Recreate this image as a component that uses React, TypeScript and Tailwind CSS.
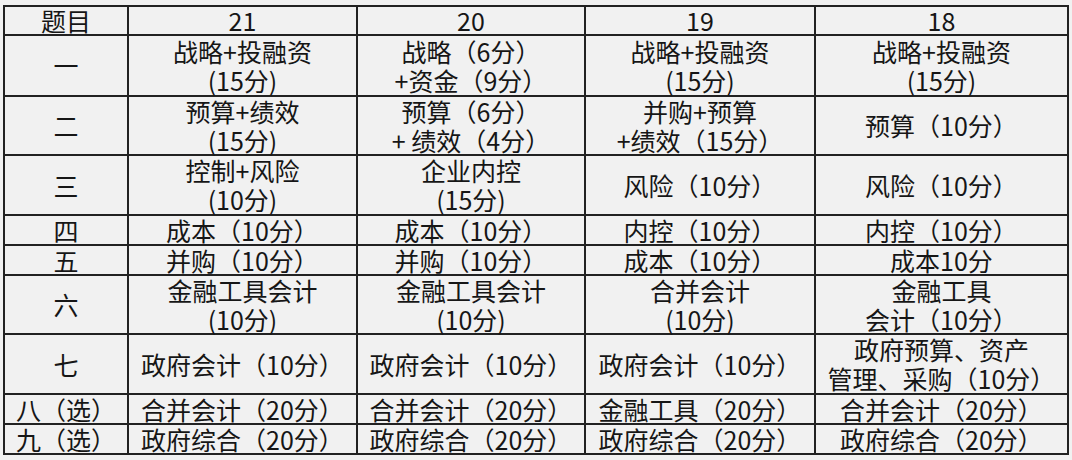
import React from "react";

type Row = { h: string; cells: string[][] };

const header = ["题目", "21", "20", "19", "18"];

const rows: Row[] = [
  {
    h: "一",
    cells: [
      ["战略+投融资", "(15分)"],
      ["战略（6分）", "+资金（9分）"],
      ["战略+投融资", "(15分)"],
      ["战略+投融资", "(15分)"],
    ],
  },
  {
    h: "二",
    cells: [
      ["预算+绩效", "(15分)"],
      ["预算（6分）", "+ 绩效（4分）"],
      ["并购+预算", "+绩效（15分）"],
      ["预算（10分）"],
    ],
  },
  {
    h: "三",
    cells: [
      ["控制+风险", "(10分)"],
      ["企业内控", "(15分)"],
      ["风险（10分）"],
      ["风险（10分）"],
    ],
  },
  {
    h: "四",
    cells: [["成本（10分）"], ["成本（10分）"], ["内控（10分）"], ["内控（10分）"]],
  },
  {
    h: "五",
    cells: [["并购（10分）"], ["并购（10分）"], ["成本（10分）"], ["成本10分"]],
  },
  {
    h: "六",
    cells: [
      ["金融工具会计", "(10分)"],
      ["金融工具会计", "(10分)"],
      ["合并会计", "(10分)"],
      ["金融工具", "会计（10分）"],
    ],
  },
  {
    h: "七",
    cells: [
      ["政府会计（10分）"],
      ["政府会计（10分）"],
      ["政府会计（10分）"],
      ["政府预算、资产", "管理、采购（10分）"],
    ],
  },
  {
    h: "八（选）",
    cells: [["合并会计（20分）"], ["合并会计（20分）"], ["金融工具（20分）"], ["合并会计（20分）"]],
  },
  {
    h: "九（选）",
    cells: [["政府综合（20分）"], ["政府综合（20分）"], ["政府综合（20分）"], ["政府综合（20分）"]],
  },
];

function Cell({ lines }: { lines: string[] }) {
  return (
    <div className="bg-[#f1f1f1] flex items-center justify-center text-center overflow-visible whitespace-nowrap">
      <p className="leading-[29px]">
        {lines.map((l, i) => (
          <React.Fragment key={i}>
            {i > 0 && <br />}
            {l}
          </React.Fragment>
        ))}
      </p>
    </div>
  );
}

export default function App() {
  return (
    <div
      className="w-[1072px] h-[460px] bg-[#f1f1f1] pl-[3px] pt-[5px] text-[#161616] text-[25px]"
      style={{ fontFamily: '"Noto Sans CJK SC", "Noto Sans", sans-serif' }}
    >
      <div className="w-[1066px] grid grid-cols-[122px_227px_226px_228px_251px] grid-rows-[27px_59px_57px_58px_28px_28px_57px_58px_28px_28px] gap-[2px] p-[2px] bg-[#222222]">
        {header.map((h, i) => (
          <Cell key={"h" + i} lines={[h]} />
        ))}
        {rows.map((r, ri) => (
          <React.Fragment key={ri}>
            <Cell lines={[r.h]} />
            {r.cells.map((c, ci) => (
              <Cell key={ci} lines={c} />
            ))}
          </React.Fragment>
        ))}
      </div>
    </div>
  );
}
